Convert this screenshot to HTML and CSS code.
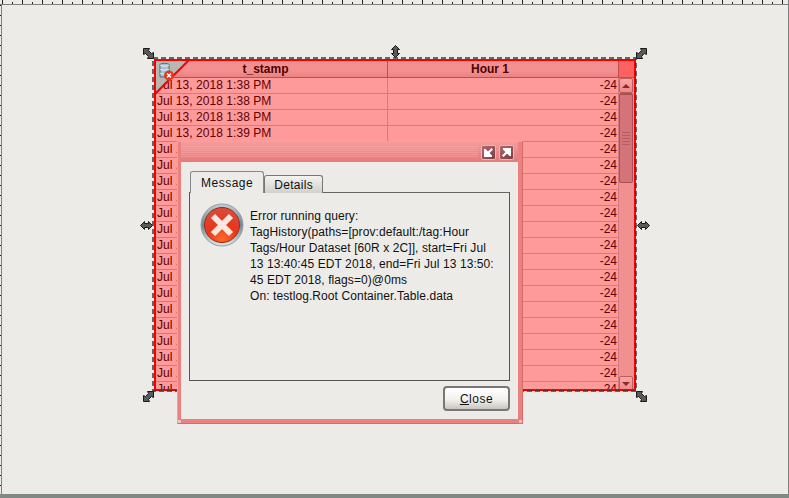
FILE: index.html
```html
<!DOCTYPE html>
<html lang="en">
<head>
    <meta charset="UTF-8">
    <title>Designer - testlog</title>
    <link rel="stylesheet" href="styles.css">
</head>
<body>
    <svg class="defs" width="0" height="0">
        <defs>
            <symbol id="handle-diag" viewBox="0 0 11 11">
                <path d="M.5.500h6L5.500 2.500 8.500 5.500 10.500 4.500v6h-6L5.500 8.500 2.500 5.500.5 6.500z" fill="#5a5a5a" stroke="#1a1a1a"/>
            </symbol>
            <symbol id="handle-horz" viewBox="0 0 13 11">
                <path d="M.5 5.500L4.500 1.500V3.500h4V1.500l4 4-4 4V7.500h-4V9.500z" fill="#5a5a5a" stroke="#1a1a1a"/>
            </symbol>
            <symbol id="handle-vert" viewBox="0 0 11 13">
                <path d="M5.500.5l4 4H7.500v4h2l-4 4-4-4h2v-4h-2z" fill="#5a5a5a" stroke="#1a1a1a"/>
            </symbol>
            <radialGradient id="err-fill" cx="50%" cy="90%" r="80%">
                <stop offset="0" stop-color="#ff6a2a"/>
                <stop offset="0.55" stop-color="#e8361a"/>
                <stop offset="1" stop-color="#d94a38"/>
            </radialGradient>
            <linearGradient id="err-ring" x1="0" y1="0" x2="0" y2="1">
                <stop offset="0" stop-color="#c4ced2"/>
                <stop offset="0.5" stop-color="#6f8790"/>
                <stop offset="1" stop-color="#dfe6e8"/>
            </linearGradient>
        </defs>
    </svg>

    <div class="canvas">
        <div class="ruler-top"></div>
        <div class="ruler-left"></div>

        <div class="data-table">
            <div class="table-head">
                <div class="head-cell col-stamp">t_stamp</div>
                <div class="head-cell col-value">Hour 1</div>
                <div class="head-corner"></div>
            </div>
            <div class="table-main">
                <div class="table-rows">
                    <div class="row"><span class="col-stamp">Jul 13, 2018 1:38 PM</span><span class="col-value">-24</span></div>
                    <div class="row"><span class="col-stamp">Jul 13, 2018 1:38 PM</span><span class="col-value">-24</span></div>
                    <div class="row"><span class="col-stamp">Jul 13, 2018 1:38 PM</span><span class="col-value">-24</span></div>
                    <div class="row"><span class="col-stamp">Jul 13, 2018 1:39 PM</span><span class="col-value">-24</span></div>
                    <div class="row"><span class="col-stamp">Jul 13, 2018 1:39 PM</span><span class="col-value">-24</span></div>
                    <div class="row"><span class="col-stamp">Jul 13, 2018 1:39 PM</span><span class="col-value">-24</span></div>
                    <div class="row"><span class="col-stamp">Jul 13, 2018 1:40 PM</span><span class="col-value">-24</span></div>
                    <div class="row"><span class="col-stamp">Jul 13, 2018 1:40 PM</span><span class="col-value">-24</span></div>
                    <div class="row"><span class="col-stamp">Jul 13, 2018 1:40 PM</span><span class="col-value">-24</span></div>
                    <div class="row"><span class="col-stamp">Jul 13, 2018 1:41 PM</span><span class="col-value">-24</span></div>
                    <div class="row"><span class="col-stamp">Jul 13, 2018 1:41 PM</span><span class="col-value">-24</span></div>
                    <div class="row"><span class="col-stamp">Jul 13, 2018 1:41 PM</span><span class="col-value">-24</span></div>
                    <div class="row"><span class="col-stamp">Jul 13, 2018 1:42 PM</span><span class="col-value">-24</span></div>
                    <div class="row"><span class="col-stamp">Jul 13, 2018 1:42 PM</span><span class="col-value">-24</span></div>
                    <div class="row"><span class="col-stamp">Jul 13, 2018 1:42 PM</span><span class="col-value">-24</span></div>
                    <div class="row"><span class="col-stamp">Jul 13, 2018 1:43 PM</span><span class="col-value">-24</span></div>
                    <div class="row"><span class="col-stamp">Jul 13, 2018 1:43 PM</span><span class="col-value">-24</span></div>
                    <div class="row"><span class="col-stamp">Jul 13, 2018 1:43 PM</span><span class="col-value">-24</span></div>
                    <div class="row"><span class="col-stamp">Jul 13, 2018 1:44 PM</span><span class="col-value">-24</span></div>
                    <div class="row"><span class="col-stamp">Jul 13, 2018 1:44 PM</span><span class="col-value">-24</span></div>
                </div>
                <div class="scrollbar">
                    <div class="scroll-btn"><span class="arrow-up"></span></div>
                    <div class="scroll-thumb">
                        <div class="grip"></div>
                    </div>
                    <div class="scroll-track"></div>
                    <div class="scroll-btn"><span class="arrow-down"></span></div>
                </div>
            </div>
            <svg class="error-corner" width="36" height="36" viewBox="0 0 36 36">
                <path d="M0 0h34L0 34z" fill="#b9b7b4"/>
                <path d="M34 0L0 34" stroke="#f40000" stroke-width="2" fill="none"/>
                <path d="M5 4.500c0-1.500 9-1.500 9 0V17H5z" fill="#a9bfcc" stroke="#55697a"/>
                <path d="M5 5c1 1.500 8 1.500 9 0M5 9c1 1.500 8 1.500 9 0M5 13c1 1.500 8 1.500 9 0" fill="none" stroke="#eef4f7"/>
                <circle cx="14" cy="15.500" r="5" fill="#e8341c"/>
                <path d="M12 13.500l4 4M16 13.500l-4 4" stroke="#fff" stroke-width="1.500"/>
            </svg>
        </div>
        <svg class="selection-dash" width="486" height="336">
            <rect x="1" y="1" width="483" height="333" fill="none" stroke="#3a3a3a" stroke-width="1.500" stroke-dasharray="5 3"/>
        </svg>

        <svg class="handle h-nw" width="11" height="11"><use href="#handle-diag"/></svg>
        <svg class="handle h-n" width="11" height="13"><use href="#handle-vert"/></svg>
        <svg class="handle h-ne flip" width="11" height="11"><use href="#handle-diag"/></svg>
        <svg class="handle h-w" width="13" height="11"><use href="#handle-horz"/></svg>
        <svg class="handle h-e" width="13" height="11"><use href="#handle-horz"/></svg>
        <svg class="handle h-sw flip" width="11" height="11"><use href="#handle-diag"/></svg>
        <svg class="handle h-se" width="11" height="11"><use href="#handle-diag"/></svg>

        <div class="dialog">
            <div class="dialog-title">
                <div class="title-stripes"></div>
                <div class="title-btn">
                    <svg width="9" height="9" viewBox="0 0 9 9"><path d="M7.500 0L9 1.500 5.500 5 8 7.500V9H0V1h1.500L4 3.500z" fill="#fff"/></svg>
                </div>
                <div class="title-btn">
                    <svg width="9" height="9" viewBox="0 0 9 9"><path d="M1.500 9L0 7.500 3.500 4 1 1.500V0h8v8H7.500L5 5.500z" fill="#fff"/></svg>
                </div>
            </div>
            <div class="dialog-body">
                <div class="tabs">
                    <div class="tab tab-active">Message</div>
                    <div class="tab tab-details">Details</div>
                </div>
                <div class="tab-panel">
                    <svg class="error-icon" width="44" height="44" viewBox="0 0 44 44">
                        <circle cx="22" cy="22" r="21" fill="url(#err-ring)" stroke="#8fa0a8"/>
                        <circle cx="22" cy="22" r="17.500" fill="url(#err-fill)" stroke="#9c2a18"/>
                        <path d="M13 13l18 18M31 13L13 31" stroke="#fbe6e0" stroke-width="6"/>
                    </svg>
                    <div class="error-text">
                        <div>Error running query:</div>
                        <div>TagHistory(paths=[prov:default:/tag:Hour</div>
                        <div>Tags/Hour Dataset [60R x 2C]], start=Fri Jul</div>
                        <div>13 13:40:45 EDT 2018, end=Fri Jul 13 13:50:</div>
                        <div>45 EDT 2018, flags=0)@0ms</div>
                        <div>On: testlog.Root Container.Table.data</div>
                    </div>
                </div>
                <div class="dialog-actions">
                    <button class="close-btn"><u>C</u>lose</button>
                </div>
            </div>
            <div class="resize-dots dots-left"></div>
            <div class="resize-dots dots-right"></div>
        </div>
    </div>
</body>
</html>
```

FILE: styles.css
```css
* {
    margin: 0;
    padding: 0;
    box-sizing: border-box;
}

html, body {
    width: 789px;
    height: 498px;
    overflow: hidden;
}

body {
    font-family: "Liberation Sans", Arial, sans-serif;
    font-size: 12px;
    background-color: #7f8a85;
}

.defs {
    position: absolute;
}

.canvas {
    position: relative;
    width: 789px;
    height: 494px;
    background-color: #ecebe7;
    border-right: 1px solid #808080;
    overflow: hidden;
}

.ruler-top {
    position: absolute;
    left: 0;
    top: 0;
    width: 789px;
    height: 5px;
    border-bottom: 1px solid #808080;
    background-image:
        repeating-linear-gradient(90deg, transparent 0 2px, #222 2px 3px, transparent 3px 20px),
        repeating-linear-gradient(90deg, transparent 0 12px, #222 12px 13px, transparent 13px 20px);
    background-size: 100% 4px, 100% 2px;
    background-position: 0 0, 0 2px;
    background-repeat: no-repeat;
}

.ruler-left {
    position: absolute;
    left: 0;
    top: 4px;
    width: 2px;
    height: 490px;
    border-right: 1px solid #808080;
    background-image: repeating-linear-gradient(180deg, transparent 0 1px, #222 1px 2px, transparent 2px 10px);
    background-size: 1px 100%;
    background-repeat: no-repeat;
}

/* table component, painted red because of the binding error */
.data-table {
    position: absolute;
    left: 154px;
    top: 59px;
    width: 482px;
    height: 332px;
    border: 2px solid #f40000;
    background-color: #ff9a9a;
    color: #5e0000;
    overflow: hidden;
}

.table-head {
    display: flex;
    height: 17px;
    background: linear-gradient(#f69090, #f59090 60%, #ec8080);
    border-bottom: 1px solid #b85050;
    color: #4c0000;
    font-weight: bold;
}

.col-stamp {
    width: 232px;
    flex: none;
}

.col-value {
    width: 231px;
    flex: none;
}

.head-cell {
    text-align: center;
    line-height: 16px;
    border-right: 1px solid #b85050;
}

.head-cell.col-stamp {
    padding-right: 12px;
}

.head-cell.col-value {
    padding-right: 26px;
}

.head-corner {
    flex: 1;
    background-color: #ff6060;
}

.table-main {
    display: flex;
    height: 313px;
}

.table-rows {
    width: 463px;
    flex: none;
}

.row {
    display: flex;
    height: 16px;
    line-height: 15px;
    border-bottom: 1px solid #d87a7a;
}

.row .col-stamp {
    padding-left: 1px;
    letter-spacing: 0.05px;
    border-right: 1px solid #d87a7a;
    white-space: nowrap;
    overflow: hidden;
}

.row .col-value {
    text-align: right;
    padding-right: 1px;
    border-right: 1px solid #d87a7a;
}

.scrollbar {
    flex: 1;
    display: flex;
    flex-direction: column;
    padding-right: 1px;
    background-color: #f29090;
}

.scroll-btn {
    height: 15px;
    flex: none;
    display: flex;
    align-items: center;
    justify-content: center;
    background: linear-gradient(#f9a6a6, #ee8a8a);
    border: 1px solid #b86060;
    border-radius: 2px;
}

.arrow-up {
    border-left: 4px solid transparent;
    border-right: 4px solid transparent;
    border-bottom: 4px solid #8a2a2a;
}

.arrow-down {
    border-left: 4px solid transparent;
    border-right: 4px solid transparent;
    border-top: 4px solid #8a2a2a;
}

.scroll-thumb {
    height: 90px;
    flex: none;
    display: flex;
    align-items: center;
    justify-content: center;
    background-color: #d27478;
    border: 1px solid #a85056;
    border-top-width: 2px;
    border-radius: 2px;
}

.grip {
    width: 8px;
    height: 14px;
    background-image: repeating-linear-gradient(180deg, #b85e62 0 1px, transparent 1px 3px);
}

.scroll-track {
    flex: 1;
}

.error-corner {
    position: absolute;
    left: -1px;
    top: -1px;
}

.selection-dash {
    position: absolute;
    left: 152px;
    top: 57px;
}

.handle {
    position: absolute;
}

.h-nw { left: 143px; top: 48px; }
.h-n { left: 390px; top: 45px; }
.h-ne { left: 636px; top: 48px; }
.h-w { left: 140px; top: 220px; }
.h-e { left: 637px; top: 220px; }
.h-sw { left: 143px; top: 391px; }
.h-se { left: 636px; top: 391px; }

.flip {
    transform: scaleX(-1);
}

/* error dialog */
.dialog {
    position: absolute;
    left: 177px;
    top: 141px;
    width: 346px;
    height: 283px;
    display: flex;
    flex-direction: column;
    padding: 0 4px 4px 3px;
    background-color: #ea8080;
    border: 1px solid #f4a0a0;
    border-right-color: #d86a6a;
    border-bottom-color: #d86a6a;
}

.dialog-title {
    display: flex;
    align-items: center;
    gap: 3px;
    height: 20px;
    flex: none;
    padding: 0 4px 0 0;
    background: linear-gradient(#f49c9c, #e67a7a);
}

.title-stripes {
    flex: 1;
    height: 12px;
    background-image: repeating-linear-gradient(180deg, rgba(255, 180, 180, 0.35) 0 1px, transparent 1px 2px);
}

.title-btn {
    width: 15px;
    height: 15px;
    display: flex;
    align-items: center;
    justify-content: center;
    background: linear-gradient(135deg, #b06a72, #7a3c44);
    border: 1px solid #f4b0b0;
    border-radius: 2px;
}

.dialog-body {
    flex: 1;
    display: flex;
    flex-direction: column;
    padding: 9px 8px 8px 8px;
    background-color: #ecebe7;
}

.tabs {
    display: flex;
    align-items: flex-end;
    height: 22px;
    padding-left: 1px;
    margin-bottom: -1px;
    position: relative;
    z-index: 1;
}

.tab {
    height: 18px;
    line-height: 18px;
    padding: 0 9px;
    letter-spacing: 0.3px;
    color: #111;
    background: linear-gradient(#f4f3f0, #d2d0ca);
    border: 1px solid #777;
    border-bottom: none;
    border-radius: 3px 3px 0 0;
}

.tab-active {
    height: 22px;
    line-height: 22px;
    padding: 0 10px;
    letter-spacing: 0.5px;
    background: #ecebe7;
    border-color: #888;
}

.tab-panel {
    height: 189px;
    flex: none;
    display: flex;
    padding: 10px 10px;
    gap: 6px;
    border: 1px solid #555;
    border-top-color: #666;
}

.error-icon {
    flex: none;
}

.error-text {
    padding-top: 5px;
    line-height: 16px;
    letter-spacing: 0.08px;
    color: #111;
    white-space: nowrap;
}

.dialog-actions {
    display: flex;
    justify-content: flex-end;
    padding-top: 5px;
}

.close-btn {
    width: 67px;
    height: 25px;
    font-family: inherit;
    font-size: 12px;
    letter-spacing: 0.5px;
    color: #111;
    background: linear-gradient(#ffffff, #f2f1ee 55%, #c8c6c0);
    border: 2px solid #777;
    border-radius: 4px;
}

.resize-dots {
    position: absolute;
    bottom: 0;
    width: 3px;
    height: 3px;
    background-color: #f6c0c0;
}

.dots-left { left: 0; }
.dots-right { right: 0; }
```
